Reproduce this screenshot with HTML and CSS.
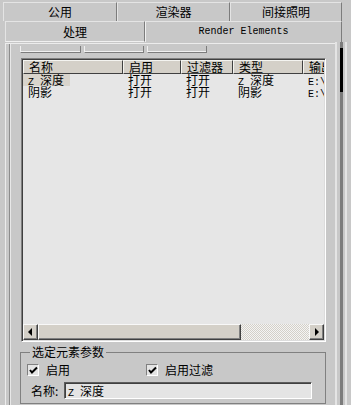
FILE: index.html
```html
<!DOCTYPE html>
<html>
<head>
<meta charset="utf-8">
<link rel="stylesheet" href="styles.css">
</head>
<body>
<div class="app">
  <div class="tabrow row1">
    <div class="tab t1">公用</div>
    <div class="tab t2">渲染器</div>
    <div class="tab t3">间接照明</div>
  </div>
  <div class="tabrow row2">
    <div class="tab t4">处理</div>
    <div class="tab t5 active"><span class="mono">Render Elements</span></div>
  </div>
  <div class="body">
    <div class="rollout">
      <div class="frame">
        <div class="stubs"><span class="stub s1"></span><span class="stub s2"></span><span class="stub s3"></span></div>
        <div class="listbox">
          <div class="list">
            <div class="hdr">
              <div class="c c1">名称</div>
              <div class="c c2">启用</div>
              <div class="c c3">过滤器</div>
              <div class="c c4">类型</div>
              <div class="c c5">输出</div>
            </div>
            <div class="row">
              <div class="c c1"><span class="selname"><span class="lat">Z&nbsp;</span>深度</span></div>
              <div class="c c2">打开</div>
              <div class="c c3">打开</div>
              <div class="c c4"><span class="lat">Z&nbsp;</span>深度</div>
              <div class="c c5"><span class="lat">E:\</span></div>
            </div>
            <div class="row">
              <div class="c c1"><span class="name">阴影</span></div>
              <div class="c c2">打开</div>
              <div class="c c3">打开</div>
              <div class="c c4">阴影</div>
              <div class="c c5"><span class="lat">E:\</span></div>
            </div>
          </div>
          <div class="hscroll">
            <div class="sbtn"><svg width="5" height="8" viewBox="0 0 5 8"><path d="M4 0 L0 4 L4 8 Z" fill="#000"/></svg></div>
            <div class="thumb"></div>
            <div class="track"></div>
            <div class="sbtn"><svg width="5" height="8" viewBox="0 0 5 8"><path d="M1 0 L5 4 L1 8 Z" fill="#000"/></svg></div>
          </div>
        </div>
        <fieldset class="group">
          <legend>选定元素参数</legend>
          <div class="checks">
            <label class="chk c-a"><span class="box"><svg width="9" height="9" viewBox="0 0 9 9"><path d="M1 4 L3 6.5 L8 1.5" stroke="#000" stroke-width="2" fill="none"/></svg></span>启用</label>
            <label class="chk c-b"><span class="box"><svg width="9" height="9" viewBox="0 0 9 9"><path d="M1 4 L3 6.5 L8 1.5" stroke="#000" stroke-width="2" fill="none"/></svg></span>启用过滤</label>
          </div>
          <div class="namerow">
            <span class="nlabel">名称:</span>
            <div class="input"><span class="lat">Z&nbsp;</span>深度</div>
          </div>
        </fieldset>
      </div>
    </div>
    <div class="vscroll">
      <div class="v1"></div>
      <div class="v2"></div>
      <div class="v3"><div class="vthumb"></div></div>
      <div class="v4"></div>
      <div class="v5"></div>
      <div class="v6"></div>
    </div>
  </div>
</div>
</body>
</html>
```

FILE: styles.css
```css
* { box-sizing: border-box; }
html, body { margin: 0; padding: 0; }
body {
  width: 351px;
  height: 405px;
  overflow: hidden;
  background: #c8c8c8;
  font-family: "Noto Sans CJK SC", sans-serif;
  font-size: 12px;
  color: #000;
}
.app { width: 351px; height: 405px; display: flex; flex-direction: column; overflow: hidden; }
.lat { font-family: "Liberation Mono", monospace; font-size: 10px; }
.mono { font-family: "Liberation Mono", monospace; font-size: 10px; }

.tabrow { display: flex; flex: none; }
.row1 { height: 21px; padding: 2px 0 0 3px; }
.row2 { height: 21px; padding-left: 5px; }
.tab {
  display: flex; align-items: center; justify-content: center;
  height: 100%;
  line-height: 12px;
  border-top: 1px solid #e4e4e4;
  border-left: 1px solid #e4e4e4;
  border-right: 1px solid #7c7c7c;
  background: #c8c8c8;
}
.t1 { width: 114px; }
.t2 { width: 113px; }
.t3 { width: 112px; }
.t4 { width: 140px; border-bottom: 1px solid #f0f0f0; }
.t5 { width: 197px; border-left: 1px solid #f0f0f0; }

.body { flex: 1; display: flex; min-height: 0; overflow: hidden; }
.rollout { width: 335px; flex: none; padding-left: 5px; padding-top: 1px; overflow: hidden; }
.frame {
  height: 100%;
  border-left: 1px solid #ececec;
  border-top: 1px solid #ececec;
  box-shadow: inset 3px 0 0 #c8c8c8, inset 4px 0 0 #8c8c8c, inset 5px 0 0 #e8e8e8;
  padding-left: 15px;
  padding-top: 2px;
}
.stubs { display: flex; height: 9px; gap: 3px; margin-left: -1px; }
.stub {
  height: 7px;
  border-right: 1px solid #7c7c7c;
  border-bottom: 1px solid #7c7c7c;
  border-left: 1px solid #f0f0f0;
  box-shadow: inset 0 -1px 0 #f0f0f0;
}
.s1 { width: 61px; }
.s2 { width: 60px; }
.s3 { width: 60px; }

.listbox {
  width: 305px;
  height: 284px;
  margin-top: 3px;
  border: 1px solid;
  border-color: #808080 #ffffff #ffffff #808080;
  box-shadow: inset 1px 1px 0 #404040, inset -1px -1px 0 #dcdcdc;
  background: #e6e6e6;
  padding: 1px;
  display: flex; flex-direction: column;
}
.list { flex: 1; overflow: hidden; }
.hdr { display: flex; height: 14px; }
.hdr .c {
  background: #d4d0c8;
  border-top: 1px solid #f4f4f0;
  border-left: 1px solid #f4f4f0;
  border-right: 1px solid #404040;
  border-bottom: 1px solid #404040;
  padding-left: 5px;
  line-height: 12px;
  font-size: 12px;
}
.c { flex: none; white-space: nowrap; }
.c1 { width: 100px; }
.c2 { width: 58px; }
.c3 { width: 52px; }
.c4 { width: 70px; }
.c5 { width: 40px; }
.row { display: flex; height: 12px; line-height: 12px; }
.row .c { padding-left: 5px; }
.row .c1 { padding-left: 0; }
.selname { display: inline-block; background: #d8d4cc; padding: 0 6px 0 5px; height: 12px; }
.name { padding-left: 5px; }

.hscroll { display: flex; height: 16px; flex: none; }
.sbtn {
  width: 15px; height: 16px;
  background: #d4d0c8;
  border-top: 1px solid #f8f8f8;
  border-left: 1px solid #f8f8f8;
  border-right: 1px solid #404040;
  border-bottom: 1px solid #404040;
  box-shadow: inset -1px -1px 0 #808080;
  display: flex; align-items: center; justify-content: center;
}
.thumb {
  width: 203px; height: 16px;
  background: #d4d0c8;
  border-top: 1px solid #f8f8f8;
  border-left: 1px solid #f8f8f8;
  border-right: 1px solid #404040;
  border-bottom: 1px solid #404040;
  box-shadow: inset -1px -1px 0 #808080;
}
.track {
  flex: 1;
  background-color: #e8e8e8;
  background-image: repeating-conic-gradient(#d4d0c8 0 25%, #f4f4f4 0 50%);
  background-size: 2px 2px;
}

.group {
  margin: 4px 0 0 -1px;
  width: 306px;
  height: 58px;
  border: 1px solid #808080;
  padding: 0 0 0 6px;
}
.group legend { padding: 0 2px; margin-left: 3px; line-height: 12px; height: 12px; }
.checks { display: flex; height: 14px; margin-top: 5px; }
.chk { display: flex; align-items: center; gap: 7px; line-height: 12px; }
.c-a { width: 119px; }
.box {
  width: 12px; height: 12px;
  border: 1px solid;
  border-color: #808080 #ffffff #ffffff #808080;
  background: #e4e4e4;
  display: flex; align-items: center; justify-content: center;
}
.namerow { display: flex; align-items: center; margin-top: 5px; }
.nlabel { width: 37px; padding-left: 4px; line-height: 12px; }
.input {
  width: 248px; height: 17px;
  border: 1px solid;
  border-color: #5c5c5c #ffffff #ffffff #5c5c5c;
  box-shadow: inset 1px 1px 0 #404040;
  background: #e4e4e4;
  padding-left: 3px;
  line-height: 15px;
}

.vscroll { width: 16px; flex: none; display: flex; }
.v1 { width: 2px; background: #e4e4e4; }
.v2 { width: 3px; background: #c8c8c8; }
.v3 { width: 3px; background: #7c7c7c; }
.vthumb { width: 4px; height: 44px; margin-top: 6px; background: #000; }
.v4 { width: 2px; background: #c8c8c8; }
.v5 { width: 2px; background: #e4e4e4; }
.v6 { width: 4px; background: #c8c8c8; }
```
